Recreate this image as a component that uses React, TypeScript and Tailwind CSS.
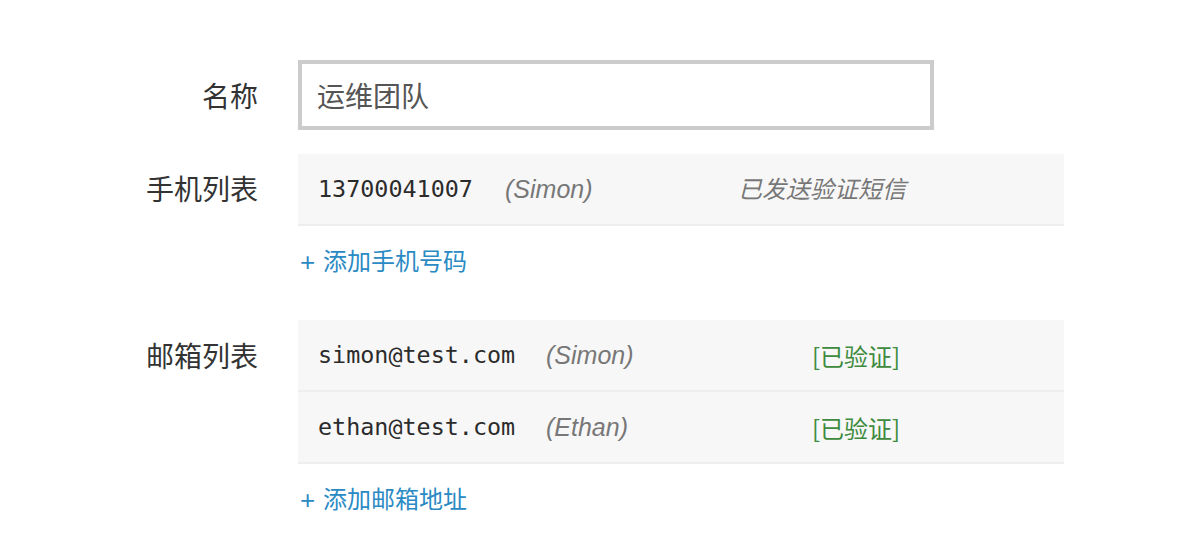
const cjk = "font-['Liberation_Sans','Noto_Sans_CJK_SC',sans-serif]";
const mono = "font-['DejaVu_Sans_Mono','Noto_Sans_CJK_SC',monospace]";

const phones = [{ value: "13700041007", name: "(Simon)", status: "已发送验证短信", verified: false }];
const emails = [
  { value: "simon@test.com", name: "(Simon)", status: "[已验证]", verified: true },
  { value: "ethan@test.com", name: "(Ethan)", status: "[已验证]", verified: true },
];

type Item = { value: string; name: string; status: string; verified: boolean };

function List({ items, valueW, nameW }: { items: Item[]; valueW: string; nameW: string }) {
  return (
    <div className="w-[766px]">
      {items.map((it) => (
        <div
          key={it.value}
          className="flex items-center h-[72px] bg-[#f7f7f7] border-b-2 border-[#eeeeee] pl-5 pt-0.5"
        >
          <span className={`${mono} ${valueW} text-[23.4px] text-[#2b2b2b]`}>{it.value}</span>
          <span className={`${cjk} ${nameW} text-[25px] italic text-[#777]`}>{it.name}</span>
          {it.verified ? (
            <span className="font-['Noto_Sans_CJK_SC',sans-serif] text-[24px] text-[#3d8b3d]">{it.status}</span>
          ) : (
            <span className={`${cjk} text-[24px] italic text-[#777]`}>{it.status}</span>
          )}
        </div>
      ))}
    </div>
  );
}

function AddLink({ text }: { text: string }) {
  return (
    <div className={`${cjk} mt-[18px] h-9 leading-9 text-[24px] text-[#2a8ac4] flex items-center`}>
      <span className="w-[25px] pl-0.5 text-[26px]">+</span>
      <span>{text}</span>
    </div>
  );
}

export default function App() {
  return (
    <div className={`${cjk} bg-white w-[1196px] h-[556px] pt-[60px]`}>
      {/* NAME */}
      <div className="flex gap-10">
        <div className="w-[258px] h-[70px] text-right text-[28px] leading-[76px] text-[#333]">名称</div>
        <div className="w-[636px] h-[70px] border-4 border-[#cccccc] flex items-center pl-[15px] pt-1.5 text-[28px] text-[#555]">
          运维团队
        </div>
      </div>

      {/* PHONES */}
      <div className="flex gap-10 mt-6">
        <div className="w-[258px] h-[72px] text-right text-[28px] leading-[74px] text-[#333]">手机列表</div>
        <div>
          <List items={phones} valueW="w-[187px]" nameW="w-[233px]" />
          <AddLink text="添加手机号码" />
        </div>
      </div>

      {/* EMAILS */}
      <div className="flex gap-10 mt-10">
        <div className="w-[258px] h-[72px] text-right text-[28px] leading-[76px] text-[#333]">邮箱列表</div>
        <div>
          <List items={emails} valueW="w-[228px]" nameW="w-[266px]" />
          <AddLink text="添加邮箱地址" />
        </div>
      </div>
    </div>
  );
}
